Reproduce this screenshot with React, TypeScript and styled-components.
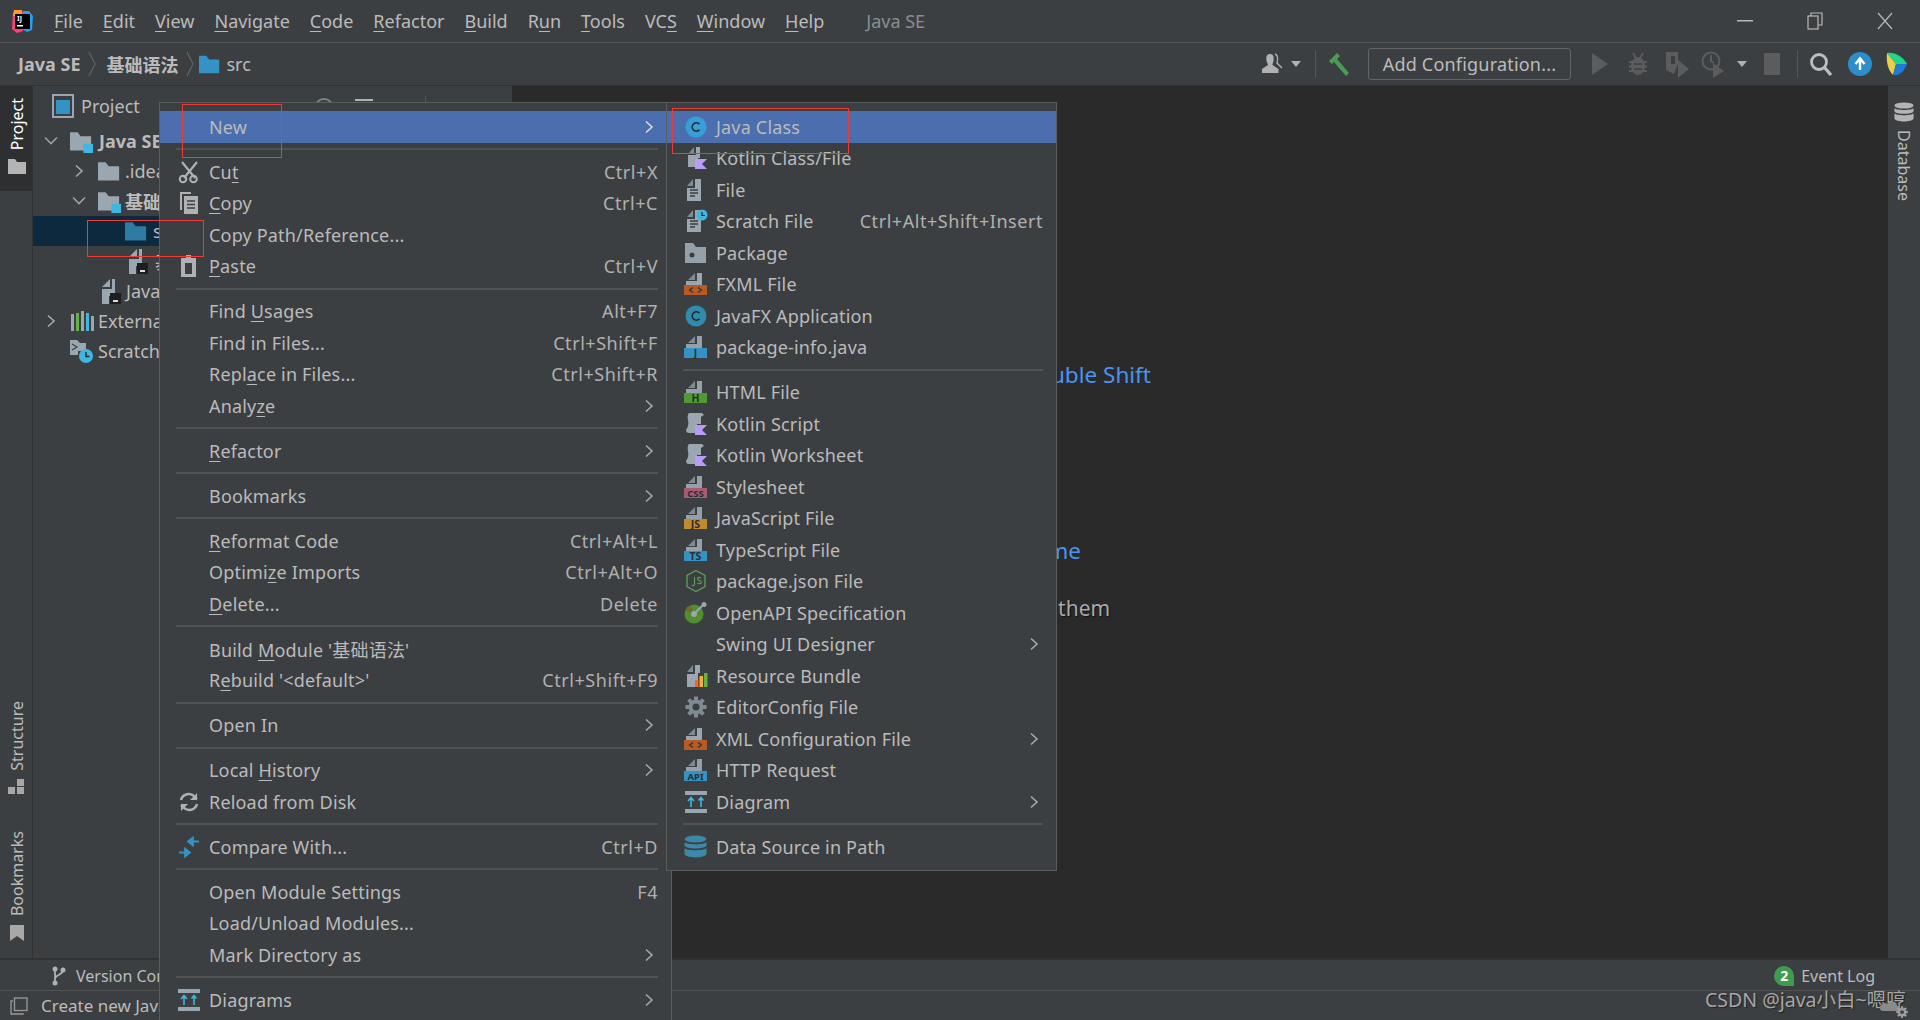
import React from 'react';
import styled, { createGlobalStyle } from 'styled-components';

const FONT = `"Noto Sans", "Noto Sans CJK SC", sans-serif`;

const Global = createGlobalStyle`
  html, body { margin: 0; padding: 0; background: #3c3f41; }
  * { box-sizing: border-box; }
`;

const Page = styled.div`
  position: relative;
  width: 1920px;
  height: 1020px;
  overflow: hidden;
  display: flex;
  flex-direction: column;
  background: #3c3f41;
  color: #bbbbbb;
  font-family: ${FONT};
  font-size: 18px;
`;

const Mn = styled.span`
  text-decoration: underline;
  text-underline-offset: 3px;
`;

/* title bar */
const TitleBar = styled.div`
  height: 43px;
  flex: none;
  display: flex;
  align-items: center;
  border-bottom: 1px solid #555759;
  padding-left: 10px;
`;
const TitleMenu = styled.div`
  display: flex;
  gap: 20px;
  margin-left: 20px;
`;
const TitleItem = styled.span`
  line-height: 42px;
`;
const WindowTitle = styled.span`
  margin-left: 42px;
  color: #8a8d8f;
`;
const WindowButtons = styled.div`
  margin-left: auto;
  display: flex;
  gap: 54px;
  padding-right: 27px;
  align-items: center;
`;

/* nav bar */
const NavBar = styled.div`
  height: 43px;
  flex: none;
  display: flex;
  align-items: center;
  padding-left: 18px;
  border-bottom: 1px solid #323232;
`;
const Crumb = styled.span<{ $bold?: boolean; $ml?: number }>`
  font-weight: ${p => (p.$bold ? 700 : 400)};
  margin-left: ${p => p.$ml ?? 0}px;
`;
const CrumbSep = styled.span<{ $r: number }>`
  display: flex;
  margin: 0 ${p => p.$r}px 0 8px;
`;
const NavTools = styled.div`
  margin-left: auto;
  display: flex;
  align-items: center;
  padding-right: 12px;
`;
const NavSep = styled.span<{ $l: number; $r: number }>`
  width: 1px;
  height: 28px;
  background: #555759;
  margin: 0 ${p => p.$r}px 0 ${p => p.$l}px;
`;
const ConfigButton = styled.div`
  width: 203px;
  height: 32px;
  margin: 0 20px 0 17px;
  border: 1px solid #646464;
  border-radius: 3px;
  display: flex;
  align-items: center;
  justify-content: center;
  background: #3c3f41;
  letter-spacing: 0.2px;
`;
const ToolSlot = styled.span<{ $w: number; $ml?: number }>`
  display: flex;
  width: ${p => p.$w}px;
  margin-left: ${p => p.$ml ?? 0}px;
  justify-content: center;
  align-items: center;
`;

/* main */
const Main = styled.div`
  flex: 1;
  min-height: 0;
  display: flex;
`;
const LeftStripe = styled.div`
  width: 33px;
  flex: none;
  display: flex;
  flex-direction: column;
  align-items: stretch;
  border-right: 1px solid #2f3133;
`;
const StripeTab = styled.div<{ $active?: boolean; $mt?: number }>`
  display: flex;
  flex-direction: column;
  align-items: center;
  gap: 8px;
  padding: 12px 0 17px 2px;
  margin-top: ${p => p.$mt ?? 0}px;
  background: ${p => (p.$active ? '#2d2f30' : 'transparent')};
  color: ${p => (p.$active ? '#ffffff' : '#bbbbbb')};
`;
const VerticalText = styled.span`
  writing-mode: vertical-rl;
  transform: rotate(180deg);
  font-size: 16px;
  line-height: 20px;
`;
const TreePanel = styled.div`
  width: 479px;
  flex: none;
`;
const PanelHeader = styled.div`
  height: 40px;
  display: flex;
  align-items: center;
  padding-left: 19px;
  gap: 7px;
`;
const HeaderIcons = styled.div`
  margin-left: 166px;
  display: flex;
  align-items: center;
  margin-top: 2px;
`;
const HeaderGap = styled.span<{ $ml: number }>`
  display: flex;
  margin-left: ${p => p.$ml}px;
`;
const HeaderDivider = styled.span`
  width: 1px;
  height: 22px;
  background: #555759;
  margin-left: 18px;
`;
const TreeRow = styled.div<{ $indent: number; $selected?: boolean }>`
  height: 30px;
  display: flex;
  align-items: center;
  padding-left: ${p => p.$indent}px;
  background: ${p => (p.$selected ? '#0d293e' : 'transparent')};
  white-space: nowrap;
  overflow: hidden;
`;
const TreeArrow = styled.span`
  display: flex;
  width: 28px;
  flex: none;
  justify-content: center;
  margin-left: -33px;
  margin-right: 5px;
`;
const TreeIcon = styled.span<{ $gap?: number }>`
  display: flex;
  width: 24px;
  flex: none;
  margin-right: ${p => p.$gap ?? 4}px;
`;
const TreeLabel = styled.span<{ $bold?: boolean }>`
  font-weight: ${p => (p.$bold ? 700 : 400)};
`;
const Editor = styled.div`
  flex: 1;
  background: #2a2a2a;
  padding: 276px 0 0 314px;
  margin-right: 2px;
  display: flex;
  flex-direction: column;
  align-items: flex-start;
  gap: 33.5px;
  font-size: 21px;
  line-height: 25px;
  white-space: nowrap;
`;
const HintLine = styled.div<{ $gap?: number }>`
  display: flex;
  gap: ${p => p.$gap ?? 10}px;
  color: #a9a9a9;
  text-shadow: 1px 1px 1px #111;
`;
const HintKey = styled.span`
  color: #4a94ee;
  font-size: 22.5px;
  text-shadow: none;
`;
const RightStripe = styled.div`
  width: 30px;
  flex: none;
  display: flex;
  flex-direction: column;
  align-items: center;
  gap: 8px;
  padding: 16px 2px 0 0;
  color: #bbbbbb;
`;
const RightText = styled.span`
  writing-mode: vertical-rl;
  font-size: 16px;
  line-height: 20px;
`;

/* bottom */
const ToolBar = styled.div`
  height: 33px;
  flex: none;
  display: flex;
  align-items: center;
  border-top: 2px solid #323232;
  border-bottom: 1px solid #505254;
  padding: 1px 45px 0 52px;
  font-size: 16px;
  gap: 10px;
`;
const EventLog = styled.div`
  margin-left: auto;
  display: flex;
  align-items: center;
  gap: 7px;
`;
const Badge = styled.span`
  width: 20px;
  height: 20px;
  border-radius: 10px 10px 0 10px;
  background: #3f9c4f;
  color: #fff;
  font-size: 14px;
  font-weight: 700;
  line-height: 20px;
  text-align: center;
`;
const StatusBar = styled.div`
  height: 29px;
  flex: none;
  display: flex;
  align-items: center;
  padding-left: 10px;
  gap: 13px;
  font-size: 17px;
`;
const Watermark = styled.div`
  position: absolute;
  left: 1705px;
  top: 987px;
  font-size: 19.5px;
  line-height: 26px;
  color: #a6a6a6;
  text-shadow: 1px 1px 1px #222;
  white-space: nowrap;
`;
const WatermarkMark = styled.svg`
  position: absolute;
  left: 1878px;
  top: 996px;
`;

/* menus */
const MenuPanel = styled.div<{ $left: number; $width: number; $height: number }>`
  position: absolute;
  left: ${p => p.$left}px;
  top: 102px;
  width: ${p => p.$width}px;
  height: ${p => p.$height}px;
  background: #3c3f41;
  border: 1px solid #5a5d5f;
  padding-top: 8px;
  display: flex;
  flex-direction: column;
`;
const MenuRow = styled.div<{ $active?: boolean }>`
  height: 31.5px;
  flex: none;
  display: flex;
  align-items: center;
  padding: 0 13px 0.5px 16px;
  background: ${p => (p.$active ? '#4b6eaf' : 'transparent')};
  white-space: nowrap;
`;
const MenuIcon = styled.span`
  width: 33px;
  flex: none;
  display: flex;
  align-items: center;
  justify-content: center;
  padding-right: 8px;
`;
const MenuLabel = styled.span`
  flex: 1;
  letter-spacing: 0.18px;
`;
const Shortcut = styled.span`
  color: #b0b0b0;
  letter-spacing: 0.55px;
`;
const Chevron = styled.span`
  display: flex;
  margin-right: 3px;
`;
const MenuSep = styled.div`
  height: 13.5px;
  flex: none;
  margin: 0 13px 0 16px;
  display: flex;
  align-items: center;
  &::after {
    content: '';
    width: 100%;
    height: 2px;
    background: #505254;
  }
`;
const RedBox = styled.div<{ $x: number; $y: number; $w: number; $h: number }>`
  position: absolute;
  left: ${p => p.$x}px;
  top: ${p => p.$y}px;
  width: ${p => p.$w}px;
  height: ${p => p.$h}px;
  border: 1px solid #f03a3a;
`;

/* icons */
const G = '#9aa7b0';
const Gd = '#7f8b91';
const Blue = '#3592c4';
const Sky = '#40b6e0';

const ChevronR = ({ c = '#a8a8a8' }: { c?: string }) => (
  <svg width="12" height="16" viewBox="0 0 12 16"><path d="M3 2.5 9 8l-6 5.5" fill="none" stroke={c} strokeWidth="1.6" /></svg>
);
const ChevronD = () => (
  <svg width="16" height="12" viewBox="0 0 16 12"><path d="M2 2.5 8 8.5l6-6" fill="none" stroke="#a0a0a0" strokeWidth="1.6" /></svg>
);
const Caret = ({ c = '#afb1b3' }: { c?: string }) => (
  <svg width="12" height="8" viewBox="0 0 12 8"><path d="M1 1h10L6 7z" fill={c} /></svg>
);
const Folder = ({ c = G, w = 22, badge }: { c?: string; w?: number; badge?: boolean }) => (
  <svg width={w + 3} height="24" viewBox="0 0 25 24">
    <path d="M0 3h8l3 4h11v15H0z" fill={c} />
    {badge && <rect x="14" y="15" width="10" height="10" fill={Sky} />}
  </svg>
);
const ProjectFile = ({ size = 22 }: { size?: number }) => (
  <svg width={size} height={size + 4} viewBox="0 0 22 26">
    <path d="M10 1v8H2z" fill={G} />
    <path d="M12 1h3v17H9v8H2V11h10z" fill={G} />
    <rect x="10" y="15" width="11" height="11" fill="#1e1e1e" />
    <rect x="13" y="22" width="5" height="2" fill="#ddd" />
  </svg>
);
const BandFile = ({ color, text }: { color: string; text: string }) => (
  <svg width="24" height="24" viewBox="0 0 24 24">
    <path d="M11 1v7H4z" fill={Gd} />
    <path d="M13 1h5v12H2V9h11z" fill={G} opacity="0.95" />
    <rect x="0" y="13" width="23" height="10" fill={color} />
    <text x="11.5" y="21.8" textAnchor="middle" fontFamily={FONT} fontSize={text.length > 2 ? 9.5 : 10.5} fontWeight="700" fill="#2b2d2e">{text}</text>
  </svg>
);
const XmlFile = () => (
  <svg width="24" height="24" viewBox="0 0 24 24">
    <path d="M11 1v7H4z" fill={Gd} />
    <path d="M13 1h5v12H2V9h11z" fill={G} />
    <rect x="0" y="13" width="23" height="10" fill="#b85a26" />
    <path d="M9 15.5 5.5 18 9 20.500M14 15.500l3.500 2.500L14 20.500" fill="none" stroke="#33302c" strokeWidth="1.2" />
  </svg>
);
const ClassIcon = ({ c = Blue }: { c?: string }) => (
  <svg width="22" height="22" viewBox="0 0 22 22">
    <circle cx="11" cy="11" r="10.500" fill={c} />
    <path d="M14.500 8.200a4.200 4.200 0 1 0 0 5.600" fill="none" stroke="#23292c" strokeWidth="1.5" />
  </svg>
);
const KotlinFile = () => (
  <svg width="24" height="24" viewBox="0 0 24 24">
    <path d="M10 1v7H4z" fill={Gd} />
    <path d="M12 1h4v11h-2v9H4V9h8z" fill={G} />
    <path d="M11 13h12l-5 5 5 5H11z" fill="#b99bf8" />
  </svg>
);
const KotlinScript = () => (
  <svg width="24" height="24" viewBox="0 0 24 24">
    <path d="M5 1h13l2 2-3 2v7h-4v9H5c-2 0-3-1-3-3 2-3 3-6 2-10-1-3 0-6 1-7z" fill={G} />
    <path d="M11 13h12l-5 5 5 5H11z" fill="#b99bf8" />
  </svg>
);
const PlainFile = ({ scratch }: { scratch?: boolean }) => (
  <svg width="24" height="24" viewBox="0 0 24 24">
    <path d="M9 1v7H3z" fill={Gd} />
    <path d="M11 1h6v22H3V10h8z" fill={G} />
    <path d="M6 12h8M6 15h8M6 18h5" stroke="#3c3f41" strokeWidth="1.300" />
    {scratch && <circle cx="18" cy="6" r="5.500" fill={Sky} />}
    {scratch && <path d="M18 3v3.500h3" fill="none" stroke="#1c2a30" strokeWidth="1.200" />}
  </svg>
);
const PackageIcon = () => (
  <svg width="24" height="22" viewBox="0 0 24 22">
    <path d="M1 1h8l3 4h10v16H1z" fill={G} opacity="0.95" />
    <circle cx="8" cy="13" r="2.500" fill="#3c3f41" />
  </svg>
);
const PackageJson = () => (
  <svg width="22" height="24" viewBox="0 0 22 24">
    <path d="M11 1.500 20 6.500v11l-9 5-9-5v-11z" fill="none" stroke="#5a9b57" strokeWidth="1.400" />
    <path d="M9.500 8v7.500c0 1.500-2 1.500-2.800.5M16 9c-1.200-1-3.500-.8-3.500.8 0 2 3.700 1.300 3.700 3.400 0 1.800-2.700 1.800-3.900.8" fill="none" stroke="#5a9b57" strokeWidth="1.200" />
  </svg>
);
const OpenApi = () => (
  <svg width="24" height="24" viewBox="0 0 24 24">
    <circle cx="10" cy="13" r="9.500" fill="#4f8f2f" />
    <path d="M7 4.200A9.500 9.500 0 0 0 1.500 9L10 13z" fill="#6f6a2c" />
    <circle cx="10" cy="13" r="3" fill="#9aa7b0" />
    <path d="M10 13 20 3" stroke="#9aa7b0" strokeWidth="2" />
    <circle cx="20" cy="3.500" r="2.500" fill="#9aa7b0" />
  </svg>
);
const BundleIcon = () => (
  <svg width="24" height="24" viewBox="0 0 24 24">
    <path d="M9 1v7H3z" fill={Gd} />
    <path d="M11 1h5v8h-2v14H3V10h8z" fill={G} />
    <rect x="11" y="16" width="3.500" height="7" fill="#f26522" />
    <rect x="15.500" y="12" width="3.500" height="11" fill="#f4af3d" />
    <rect x="20" y="9" width="3.500" height="14" fill="#62b543" />
  </svg>
);
const GearIcon = ({ c = Gd, s = 22 }: { c?: string; s?: number }) => (
  <svg width={s} height={s} viewBox="0 0 22 22">
    <circle cx="11" cy="11" r="5.500" fill="none" stroke={c} strokeWidth="4" />
    {[0, 45, 90, 135, 180, 225, 270, 315].map(a => (
      <rect key={a} x="9" y="0.500" width="4" height="4" fill={c} transform={`rotate(${a} 11 11)`} />
    ))}
  </svg>
);
const DiagramIcon = () => (
  <svg width="24" height="24" viewBox="0 0 24 24">
    <rect x="1" y="1" width="22" height="4" fill={G} />
    <rect x="1" y="19" width="22" height="4" fill={G} />
    <path d="M7 17V8M4 11l3-3.500L10 11M17 17V8M14.500 10.500 17 7.500l2.500 3" fill="none" stroke={Sky} strokeWidth="1.600" />
  </svg>
);
const DbIcon = ({ c = '#3d87a8', w = 23 }: { c?: string; w?: number }) => (
  <svg width={w} height={w} viewBox="0 0 23 23">
    <ellipse cx="11.500" cy="4" rx="11" ry="3.500" fill={c} />
    <path d="M.500 7c1 3 21 3 22 0v3.500c-1 4-21 4-22 0z" fill={c} />
    <path d="M.500 13c1 3 21 3 22 0v6c-1 4.500-21 4.500-22 0z" fill={c} />
  </svg>
);
const ScissorsIcon = () => (
  <svg width="22" height="24" viewBox="0 0 22 24">
    <path d="M4 2l13 16M19 2 6 18" stroke="#afb1b3" strokeWidth="2.200" fill="none" />
    <circle cx="5" cy="19" r="3.300" fill="none" stroke="#afb1b3" strokeWidth="2" />
    <circle cx="15.500" cy="19" r="3.300" fill="none" stroke="#afb1b3" strokeWidth="2" />
  </svg>
);
const CopyIcon = () => (
  <svg width="20" height="24" viewBox="0 0 20 24">
    <path d="M1 1h11v2H3v16H1z" fill="#afb1b3" />
    <rect x="5" y="5" width="14" height="18" fill="#afb1b3" />
    <path d="M8 10h8M8 13.500h8M8 17h8" stroke="#3c3f41" strokeWidth="1.400" />
  </svg>
);
const PasteIcon = () => (
  <svg width="18" height="24" viewBox="0 0 18 24">
    <rect x="1" y="4" width="15" height="19" fill="#afb1b3" />
    <rect x="5" y="9" width="7" height="11" fill="#3c3f41" />
    <rect x="6" y="1" width="5" height="5" fill="#afb1b3" />
  </svg>
);
const ReloadIcon = () => (
  <svg width="20" height="20" viewBox="0 0 20 20">
    <path d="M2 8a8 8 0 0 1 13.500-3.500L18 7" fill="none" stroke="#afb1b3" strokeWidth="2.500" />
    <path d="M18 1v7h-7z" fill="#afb1b3" />
    <path d="M18 12A8 8 0 0 1 4.500 15.500L2 13" fill="none" stroke="#afb1b3" strokeWidth="2.500" />
    <path d="M2 19v-7h7z" fill="#afb1b3" />
  </svg>
);
const CompareIcon = () => (
  <svg width="22" height="22" viewBox="0 0 22 22">
    <path d="M21 5.500h-6M15 5.500l0-4-5 4 5 4z" stroke={Blue} fill={Blue} strokeWidth="1.800" />
    <path d="M1 16.500h6M7 16.500l0-4 5 4-5 4z" stroke={Blue} fill={Blue} strokeWidth="1.800" />
  </svg>
);
const Logo = () => (
  <svg width="24" height="25" viewBox="0 0 24 25">
    <path d="M3 4 10 1l4 3-1 18-6 2-5-4z" fill="#fc3f7a" />
    <path d="M4 1h8v6H3z" fill="#fe9a2e" />
    <path d="M13 2h6l4 5-1 14-5 2-5-3z" fill="#2a9ff0" />
    <rect x="5" y="5" width="15" height="15" fill="#000" />
    <text x="7" y="12" fontFamily={FONT} fontSize="7" fontWeight="700" fill="#fff">IJ</text>
    <rect x="7" y="16" width="6" height="1.500" fill="#fff" />
  </svg>
);
const Hammer = () => (
  <svg width="24" height="24" viewBox="0 0 24 24">
    <path d="M2 9 10 1l3 3-3 3 12 14-3 3L7 10l-2 2z" fill="#499c54" />
  </svg>
);
const UserIcon = () => (
  <svg width="22" height="22" viewBox="0 0 22 22">
    <path d="M8 1c4 0 4 4 3.500 7-.5 2-1 3-1 4l6 4v4H0v-4l6-4c0-1-1-2-1.500-4C4 5 4 1 8 1z" fill="#afb1b3" />
    <path d="M13 1c3 1 3 5 2 9l5 5" fill="none" stroke="#afb1b3" strokeWidth="1.400" />
  </svg>
);
const Play = () => <svg width="18" height="24" viewBox="0 0 18 24"><path d="M1 1l16 11L1 23z" fill="#5a5c5e" /></svg>;
const Bug = () => (
  <svg width="18" height="24" viewBox="0 0 18 24">
    <ellipse cx="9" cy="14" rx="7" ry="9" fill="#5a5c5e" />
    <path d="M4 1l3 5M14 1l-3 5M0 10h18M0 14.500h18M0 19h18" stroke="#5a5c5e" strokeWidth="1.800" />
    <path d="M5 12h8M5 17h8" stroke="#3c3f41" strokeWidth="1.500" />
  </svg>
);
const Coverage = () => (
  <svg width="24" height="28" viewBox="0 0 24 28">
    <path d="M1 2h12v12l-4 10-8-4z" fill="#5a5c5e" />
    <path d="M10 6h-4v8h4z" fill="#3c3f41" />
    <path d="M13 10l11 9-11 9z" fill="#5a5c5e" />
  </svg>
);
const Profile = () => (
  <svg width="24" height="28" viewBox="0 0 24 28">
    <circle cx="10" cy="11" r="8.500" fill="none" stroke="#5a5c5e" strokeWidth="2" />
    <path d="M10 5v6l3 2" fill="none" stroke="#5a5c5e" strokeWidth="2" />
    <path d="M12 13l11 8-11 7z" fill="#5a5c5e" />
  </svg>
);
const Stop = () => <svg width="16" height="22" viewBox="0 0 16 22"><rect width="16" height="22" fill="#5a5c5e" /></svg>;
const Search = () => (
  <svg width="24" height="24" viewBox="0 0 24 24">
    <circle cx="10" cy="10" r="7.500" fill="none" stroke="#bcbec0" strokeWidth="2.800" />
    <path d="M15.500 15.500 22 23" stroke="#bcbec0" strokeWidth="3.200" />
  </svg>
);
const Upload = () => (
  <svg width="24" height="24" viewBox="0 0 24 24">
    <circle cx="12" cy="12" r="12" fill="#2d8ec9" />
    <path d="M12 18V8M7.500 12 12 6.500l4.500 5.500" fill="none" stroke="#fff" strokeWidth="2.400" />
  </svg>
);
const Toolbox = () => (
  <svg width="22" height="24" viewBox="0 0 22 24">
    <path d="M1 1c8-1 15 3 20 11L10 12z" fill="#20d68a" />
    <path d="M1 1c-1 9 1 17 6 22l3-11z" fill="#e8d14a" />
    <path d="M7 23c6 1 11-3 14-11H10z" fill="#1f7ad6" />
  </svg>
);
const Minimize = () => <svg width="16" height="3" viewBox="0 0 16 3"><rect width="16" height="1.500" fill="#b8b8b8" /></svg>;
const Restore = () => (
  <svg width="16" height="18" viewBox="0 0 16 18">
    <rect x="1" y="4" width="10" height="13" fill="none" stroke="#b8b8b8" strokeWidth="1.200" />
    <path d="M4 4V1h11v12h-4" fill="none" stroke="#b8b8b8" strokeWidth="1.200" />
  </svg>
);
const Close = () => <svg width="16" height="18" viewBox="0 0 16 18"><path d="M1 1l14 16M15 1 1 17" stroke="#b8b8b8" strokeWidth="1.200" /></svg>;
const StripFolder = () => <svg width="18" height="16" viewBox="0 0 18 16"><path d="M0 1h7l2 3h9v12H0z" fill="#b4b4b4" /></svg>;
const StructIcon = () => (
  <svg width="18" height="16" viewBox="0 0 18 16">
    <rect x="9" y="0" width="7" height="7" fill="#a8a8a8" /><rect x="0" y="8" width="7" height="7" fill="#a8a8a8" /><rect x="9" y="8" width="7" height="7" fill="#a8a8a8" />
  </svg>
);
const BookmarkIcon = () => <svg width="16" height="18" viewBox="0 0 16 18"><path d="M1 1h14v16l-7-5-7 5z" fill="#a8a8a8" /></svg>;
const CrumbChevron = () => <svg width="9" height="26" viewBox="0 0 9 26"><path d="M1 1l6 12-6 12" fill="none" stroke="#626567" strokeWidth="1.200" /></svg>;
const ProjectBox = () => (
  <svg width="22" height="24" viewBox="0 0 22 24">
    <rect x="1" y="1" width="20" height="22" fill="none" stroke={G} strokeWidth="2" />
    <rect x="4" y="6" width="14" height="14" fill={Blue} />
  </svg>
);
const ExternalLibs = () => (
  <svg width="24" height="22" viewBox="0 0 24 22">
    <rect x="1" y="4" width="3" height="17" fill={G} />
    <rect x="6" y="3" width="3" height="18" fill="#62b543" />
    <rect x="11" y="1" width="3" height="20" fill={G} />
    <rect x="16" y="3" width="3" height="18" fill={Sky} />
    <rect x="21" y="6" width="3" height="15" fill={G} />
  </svg>
);
const ScratchDir = () => (
  <svg width="24" height="24" viewBox="0 0 24 24">
    <path d="M0 1h7l3 3h6v8h-8v4H0z" fill={G} />
    <path d="M2 5l5 3-5 3" fill="none" stroke="#3c3f41" strokeWidth="1.200" />
    <circle cx="16" cy="17" r="7" fill={Sky} />
    <path d="M16 13v4.500h3.500" fill="none" stroke="#1c2a30" strokeWidth="1.400" />
  </svg>
);
const VcsIcon = () => (
  <svg width="14" height="20" viewBox="0 0 14 20">
    <circle cx="3" cy="3" r="2.500" fill="#afb1b3" /><circle cx="3" cy="17" r="2.500" fill="#afb1b3" /><circle cx="11" cy="4" r="2.500" fill="#afb1b3" />
    <path d="M3 3v14M11 4c0 5-6 4-8 8" fill="none" stroke="#afb1b3" strokeWidth="1.800" />
  </svg>
);
const StatusBox = () => (
  <svg width="18" height="18" viewBox="0 0 18 18">
    <rect x="4.500" y="1" width="12.500" height="12.500" fill="none" stroke="#9a9a9a" strokeWidth="1.300" />
    <path d="M3 4H1v13h12v-1M1 17" fill="none" stroke="#9a9a9a" strokeWidth="1.300" />
  </svg>
);

type Item =
  | { sep: true }
  | { label: React.ReactNode; icon?: React.ReactNode; short?: string; sub?: boolean; active?: boolean };

const mainMenu: Item[] = [
  { label: 'New', sub: true, active: true },
  { sep: true },
  { label: <>Cu<Mn>t</Mn></>, icon: <ScissorsIcon />, short: 'Ctrl+X' },
  { label: <><Mn>C</Mn>opy</>, icon: <CopyIcon />, short: 'Ctrl+C' },
  { label: 'Copy Path/Reference...' },
  { label: <><Mn>P</Mn>aste</>, icon: <PasteIcon />, short: 'Ctrl+V' },
  { sep: true },
  { label: <>Find <Mn>U</Mn>sages</>, short: 'Alt+F7' },
  { label: 'Find in Files...', short: 'Ctrl+Shift+F' },
  { label: <>Repl<Mn>a</Mn>ce in Files...</>, short: 'Ctrl+Shift+R' },
  { label: <>Analy<Mn>z</Mn>e</>, sub: true },
  { sep: true },
  { label: <><Mn>R</Mn>efactor</>, sub: true },
  { sep: true },
  { label: 'Bookmarks', sub: true },
  { sep: true },
  { label: <><Mn>R</Mn>eformat Code</>, short: 'Ctrl+Alt+L' },
  { label: <>Optimi<Mn>z</Mn>e Imports</>, short: 'Ctrl+Alt+O' },
  { label: <><Mn>D</Mn>elete...</>, short: 'Delete' },
  { sep: true },
  { label: <>Build <Mn>M</Mn>odule '基础语法'</> },
  { label: <>R<Mn>e</Mn>build '&lt;default&gt;'</>, short: 'Ctrl+Shift+F9' },
  { sep: true },
  { label: 'Open In', sub: true },
  { sep: true },
  { label: <>Local <Mn>H</Mn>istory</>, sub: true },
  { label: 'Reload from Disk', icon: <ReloadIcon /> },
  { sep: true },
  { label: 'Compare With...', icon: <CompareIcon />, short: 'Ctrl+D' },
  { sep: true },
  { label: 'Open Module Settings', short: 'F4' },
  { label: 'Load/Unload Modules...' },
  { label: 'Mark Directory as', sub: true },
  { sep: true },
  { label: 'Diagrams', icon: <DiagramIcon />, sub: true },
];

const subMenu: Item[] = [
  { label: 'Java Class', icon: <ClassIcon c="#389fd6" />, active: true },
  { label: 'Kotlin Class/File', icon: <KotlinFile /> },
  { label: 'File', icon: <PlainFile /> },
  { label: 'Scratch File', icon: <PlainFile scratch />, short: 'Ctrl+Alt+Shift+Insert' },
  { label: 'Package', icon: <PackageIcon /> },
  { label: 'FXML File', icon: <XmlFile /> },
  { label: 'JavaFX Application', icon: <ClassIcon c="#2f8cad" /> },
  { label: 'package-info.java', icon: <BandFile color={Blue} text="J" /> },
  { sep: true },
  { label: 'HTML File', icon: <BandFile color="#4f9a33" text="H" /> },
  { label: 'Kotlin Script', icon: <KotlinScript /> },
  { label: 'Kotlin Worksheet', icon: <KotlinScript /> },
  { label: 'Stylesheet', icon: <BandFile color="#a85c72" text="CSS" /> },
  { label: 'JavaScript File', icon: <BandFile color="#c08a2e" text="JS" /> },
  { label: 'TypeScript File', icon: <BandFile color={Blue} text="TS" /> },
  { label: 'package.json File', icon: <PackageJson /> },
  { label: 'OpenAPI Specification', icon: <OpenApi /> },
  { label: 'Swing UI Designer', sub: true },
  { label: 'Resource Bundle', icon: <BundleIcon /> },
  { label: 'EditorConfig File', icon: <GearIcon /> },
  { label: 'XML Configuration File', icon: <XmlFile />, sub: true },
  { label: 'HTTP Request', icon: <BandFile color={Blue} text="API" /> },
  { label: 'Diagram', icon: <DiagramIcon />, sub: true },
  { sep: true },
  { label: 'Data Source in Path', icon: <DbIcon /> },
];

const Menu = ({ items, left, width, height }: { items: Item[]; left: number; width: number; height: number }) => (
  <MenuPanel $left={left} $width={width} $height={height}>
    {items.map((it, i) =>
      'sep' in it ? (
        <MenuSep key={i} />
      ) : (
        <MenuRow key={i} $active={it.active}>
          <MenuIcon>{it.icon}</MenuIcon>
          <MenuLabel>{it.label}</MenuLabel>
          {it.short && <Shortcut>{it.short}</Shortcut>}
          {it.sub && <Chevron><ChevronR c={it.active ? '#dcdcdc' : '#a8a8a8'} /></Chevron>}
        </MenuRow>
      ),
    )}
  </MenuPanel>
);

const titles: React.ReactNode[] = [
  <><Mn>F</Mn>ile</>, <><Mn>E</Mn>dit</>, <><Mn>V</Mn>iew</>, <><Mn>N</Mn>avigate</>, <><Mn>C</Mn>ode</>,
  <><Mn>R</Mn>efactor</>, <><Mn>B</Mn>uild</>, <>R<Mn>u</Mn>n</>, <><Mn>T</Mn>ools</>, <>VC<Mn>S</Mn></>,
  <><Mn>W</Mn>indow</>, <><Mn>H</Mn>elp</>,
];

export default function App() {
  return (
    <Page>
      <Global />
      <TitleBar>
        <Logo />
        <TitleMenu>
          {titles.map((t, i) => <TitleItem key={i}>{t}</TitleItem>)}
        </TitleMenu>
        <WindowTitle>Java SE</WindowTitle>
        <WindowButtons>
          <Minimize />
          <Restore />
          <Close />
        </WindowButtons>
      </TitleBar>
      <NavBar>
        <Crumb $bold>Java SE</Crumb>
        <CrumbSep $r={9}><CrumbChevron /></CrumbSep>
        <Crumb $bold>基础语法</Crumb>
        <CrumbSep $r={4}><CrumbChevron /></CrumbSep>
        <Folder c={Blue} w={20} />
        <Crumb $ml={4}>src</Crumb>
        <NavTools>
          <ToolSlot $w={22}><UserIcon /></ToolSlot>
          <ToolSlot $w={12} $ml={6}><Caret /></ToolSlot>
          <NavSep $l={13} $r={11} />
          <ToolSlot $w={24}><Hammer /></ToolSlot>
          <ConfigButton>Add Configuration...</ConfigButton>
          <ToolSlot $w={18}><Play /></ToolSlot>
          <ToolSlot $w={22} $ml={18}><Bug /></ToolSlot>
          <ToolSlot $w={24} $ml={16}><Coverage /></ToolSlot>
          <ToolSlot $w={24} $ml={12}><Profile /></ToolSlot>
          <ToolSlot $w={12} $ml={11}><Caret /></ToolSlot>
          <ToolSlot $w={16} $ml={16}><Stop /></ToolSlot>
          <NavSep $l={17} $r={11} />
          <ToolSlot $w={24}><Search /></ToolSlot>
          <ToolSlot $w={24} $ml={15}><Upload /></ToolSlot>
          <ToolSlot $w={22} $ml={14}><Toolbox /></ToolSlot>
        </NavTools>
      </NavBar>
      <Main>
        <LeftStripe>
          <StripeTab $active>
            <VerticalText>Project</VerticalText>
            <StripFolder />
          </StripeTab>
          <StripeTab $mt={498}>
            <VerticalText>Structure</VerticalText>
            <StructIcon />
          </StripeTab>
          <StripeTab $mt={7}>
            <VerticalText>Bookmarks</VerticalText>
            <BookmarkIcon />
          </StripeTab>
        </LeftStripe>
        <TreePanel>
          <PanelHeader>
            <ProjectBox />
            <span>Project</span>
            <HeaderIcons>
              <svg width="22" height="20" viewBox="0 0 22 20"><circle cx="11" cy="11" r="9" fill="none" stroke="#7f8285" strokeWidth="2" /></svg>
              <HeaderGap $ml={20}><svg width="18" height="20" viewBox="0 0 18 20"><rect x="0" y="2" width="18" height="2" fill="#afb1b3" /></svg></HeaderGap>
              <HeaderGap $ml={22}><Caret /></HeaderGap>
              <HeaderDivider />
              <HeaderGap $ml={18}><svg width="18" height="20" viewBox="0 0 18 20"><circle cx="9" cy="11" r="6" fill="#afb1b3" /></svg></HeaderGap>
            </HeaderIcons>
          </PanelHeader>
          <TreeRow $indent={37}><TreeArrow><ChevronD /></TreeArrow><TreeIcon $gap={5}><Folder badge /></TreeIcon><TreeLabel $bold>Java SE</TreeLabel></TreeRow>
          <TreeRow $indent={65}><TreeArrow><ChevronR /></TreeArrow><TreeIcon $gap={3}><Folder /></TreeIcon><TreeLabel>.idea</TreeLabel></TreeRow>
          <TreeRow $indent={65}><TreeArrow><ChevronD /></TreeArrow><TreeIcon $gap={3}><Folder badge /></TreeIcon><TreeLabel $bold>基础语法</TreeLabel></TreeRow>
          <TreeRow $indent={92} $selected><TreeIcon><Folder c="#2e7ba3" /></TreeIcon><TreeLabel>src</TreeLabel></TreeRow>
          <TreeRow $indent={94}><TreeIcon><ProjectFile /></TreeIcon><TreeLabel>基础语法.iml</TreeLabel></TreeRow>
          <TreeRow $indent={67}><TreeIcon $gap={2}><ProjectFile /></TreeIcon><TreeLabel>Java SE.iml</TreeLabel></TreeRow>
          <TreeRow $indent={37}><TreeArrow><ChevronR /></TreeArrow><TreeIcon><ExternalLibs /></TreeIcon><TreeLabel>External Libraries</TreeLabel></TreeRow>
          <TreeRow $indent={37}><TreeIcon><ScratchDir /></TreeIcon><TreeLabel>Scratches and Consoles</TreeLabel></TreeRow>
        </TreePanel>
        <Editor>
          <HintLine $gap={8}>Search Everywhere<HintKey>Double Shift</HintKey></HintLine>
          <HintLine $gap={2}>Go to File<HintKey>Ctrl+Shift+N</HintKey></HintLine>
          <HintLine>Recent Files<HintKey>Ctrl+E</HintKey></HintLine>
          <HintLine $gap={3}>Navigation Bar<HintKey>Alt+Home</HintKey></HintLine>
          <HintLine>Drop files here to open them</HintLine>
        </Editor>
        <RightStripe>
          <DbIcon c="#b4b4b4" w={20} />
          <RightText>Database</RightText>
        </RightStripe>
      </Main>
      <ToolBar>
        <VcsIcon />
        <span>Version Control</span>
        <EventLog><Badge>2</Badge><span>Event Log</span></EventLog>
      </ToolBar>
      <StatusBar>
        <StatusBox />
        <span>Create new Java class</span>
      </StatusBar>

      <Menu items={mainMenu} left={159} width={513} height={940} />
      <Menu items={subMenu} left={666} width={391} height={769} />

      <RedBox $x={182} $y={104} $w={100} $h={54} />
      <RedBox $x={87} $y={220} $w={117} $h={37} />
      <RedBox $x={672} $y={108} $w={177} $h={46} />

      <Watermark>CSDN @java小白~嗯哼</Watermark>
      <WatermarkMark width="36" height="24" viewBox="0 0 36 24">
        <path d="M2 12c0-4 5-6 8-4 2-4 9-3 9 2 3 0 4 4 1 5H5c-2 0-3-1-3-3z" fill="#8a8a8a" />
        <g transform="translate(18 10) scale(.55)">
          <circle cx="11" cy="11" r="5.500" fill="none" stroke="#a0a0a0" strokeWidth="4" />
          {[0, 45, 90, 135, 180, 225, 270, 315].map(a => (
            <rect key={a} x="9" y="0.500" width="4" height="4" fill="#a0a0a0" transform={`rotate(${a} 11 11)`} />
          ))}
        </g>
      </WatermarkMark>
    </Page>
  );
}
